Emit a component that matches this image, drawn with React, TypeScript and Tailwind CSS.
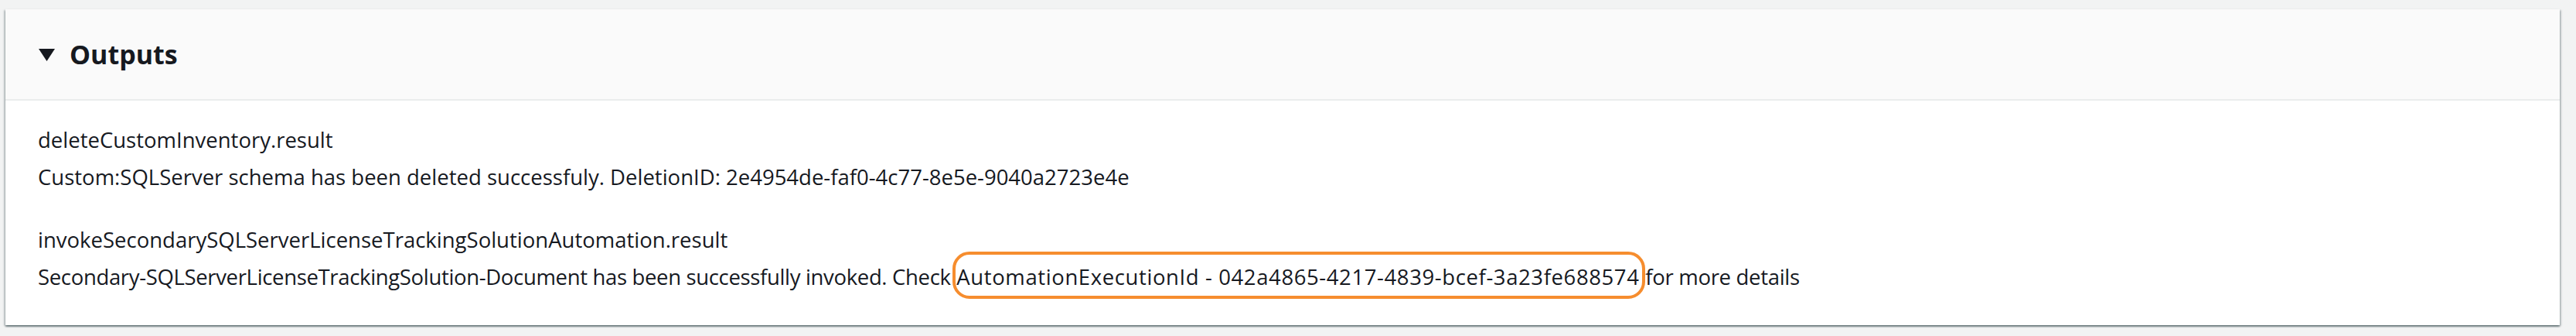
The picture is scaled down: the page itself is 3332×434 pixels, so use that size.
import React from "react";

export default function App() {
  return (
    <div
      className="w-[3332px] h-[434px] bg-[#f2f3f3] pt-[12px] pl-[7px] text-[#16191f]"
      style={{ fontFamily: '"Open Sans", "Noto Sans", sans-serif' }}
    >
      <div className="w-[3304px] h-[408px] bg-white shadow-[0_2px_2px_0_rgba(0,28,36,0.45),2px_1px_2px_0_rgba(0,28,36,0.18),-2px_1px_2px_0_rgba(0,28,36,0.18)] flex flex-col">
        <div className="h-[118px] bg-[#fafafa] border-b-2 border-[#eaeded] flex items-center pl-[43px]">
          <svg width="21" height="16" viewBox="0 0 21 16" className="mt-[2px]">
            <polygon points="0,0 21,0 10.5,16" fill="#16191f" />
          </svg>
          <span className="ml-[19px] text-[34px] font-bold leading-none">Outputs</span>
        </div>
        <div className="pl-[42px] pt-[27px] text-[27.5px] leading-[48px] whitespace-nowrap">
          <div>deleteCustomInventory.result</div>
          <div>
            Custom:SQLServer schema has been deleted successfuly. DeletionID: 2e4954de-faf0-4c77-8e5e-9040a2723e4e
          </div>
          <div className="mt-[33px]">invokeSecondarySQLServerLicenseTrackingSolutionAutomation.result</div>
          <div>
            <span className="tracking-[-0.34px]">
              Secondary-SQLServerLicenseTrackingSolution-Document has been successfully invoked. Check
            </span>
            <span className="relative tracking-[0.6px]">
              {" "}AutomationExecutionId - 042a4865-4217-4839-bcef-3a23fe688574{" "}
              <span className="absolute left-[2px] right-0 top-[-14px] bottom-[-10px] border-[4px] border-[#f68d2e] rounded-[22px]" />
            </span>
            <span className="tracking-[-0.3px]">for more details</span>
          </div>
        </div>
      </div>
    </div>
  );
}
